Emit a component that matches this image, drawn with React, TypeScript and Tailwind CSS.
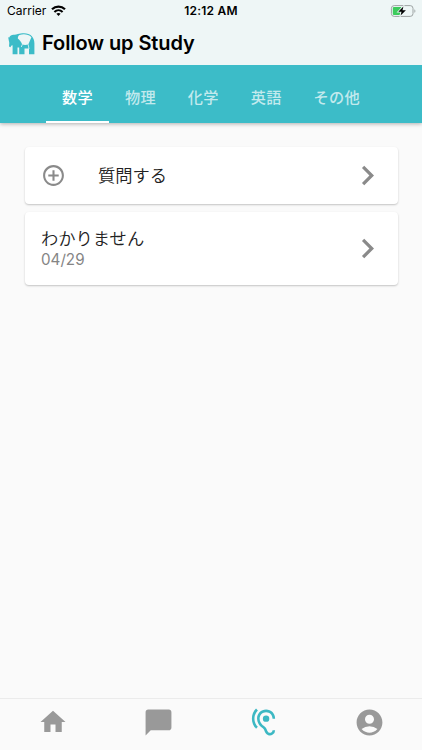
import {
  MdAccountCircle,
  MdAddCircleOutline,
  MdChatBubble,
  MdChevronRight,
  MdHearing,
  MdHome,
} from "react-icons/md";

const tabs = ["数学", "物理", "化学", "英語", "その他"];

function Elephant() {
  return (
    <svg width="27" height="22" viewBox="0 0 27 22" fill="#3cbcc8">
      <path d="M1.300 4.500C2 2.400 4 1.600 6 1.800c1.500.1 2.500-.2 3.800-.7C11.700.4 13.700.2 16 .2c6.500 0 10.400 4 10.400 10V21.300H21V15.600h-4.500v5.700H11.200V14.500H9.500v6.800H4.600V12.200C3 12.400 2.700 13.300 2.600 14.300L1 13.500C1.200 11 1.500 10 .9 8L.2 4.200z" />
      <path
        d="M11.500 2.100c4-1.500 9-.8 11.900 2.100L20.300 11.600c-2.200.5-4.300.5-6.100 0C13.400 9 11.800 7.200 9.800 5.500c.1-1.500.6-2.800 1.700-3.400z"
        fill="#eef6f6"
      />
      <path d="M14.300 11.400L13.300 14M20.200 11.400L21 16" stroke="#eef6f6" strokeWidth=".8" />
    </svg>
  );
}

function StatusBar() {
  return (
    <div className="relative flex h-[22px] items-center justify-between pl-[7px] pr-[6px]">
      <div className="flex items-center gap-[5px]">
        <span className="text-[12px] leading-[22px]">Carrier</span>
        <svg width="15" height="12" viewBox="0 0 15 12" fill="none" stroke="#000">
          <path d="M1 4.300C4.700.6 10.300.6 14 4.300" strokeWidth="2.200" />
          <path d="M3.400 6.900C5.800 4.600 9.200 4.600 11.600 6.900" strokeWidth="2.100" />
          <path d="M5.400 8.700c1.200-1.100 3-1.100 4.200 0L7.500 11z" fill="#000" stroke="none" />
        </svg>
      </div>
      <div className="absolute inset-x-0 text-center text-[12px] font-semibold leading-[22px] tracking-[0.25px]">
        12:12 AM
      </div>
      <svg width="26" height="12" viewBox="0 0 26 12">
        <rect x="1.400" y=".6" width="21.600" height="10.800" rx="2.800" fill="none" stroke="#9da3a3" />
        <path d="M4 2h7.500L9 6.500h2L9.500 10H4a1.200 1.200 0 0 1-1.200-1.200V3.200A1.200 1.200 0 0 1 4 2z" fill="#3ccb5c" />
        <path d="M13.400 1.500L8.300 6.700h3.200L10.600 10.500l5.300-5.300h-3.400z" fill="#000" stroke="#eef6f6" strokeWidth="1.500" paintOrder="stroke" />
        <path d="M24.400 4.200c1.300.5 1.300 3.100 0 3.600z" fill="#9da3a3" />
      </svg>
    </div>
  );
}

export default function App() {
  return (
    <div className="flex h-[750px] w-[422px] flex-col overflow-hidden bg-[#fafafa] font-['Inter','Noto_Sans_CJK_JP',sans-serif]">
      <div className="relative h-[65px] bg-[#eef6f6] text-black">
        <StatusBar />
        <div className="flex h-[43px] items-center gap-[7px] pl-[8px]">
          <Elephant />
          <h1 className="text-[20px] font-[560] leading-[43px] tracking-[-0.08px]">
            Follow up Study
          </h1>
        </div>
      </div>

      <div className="flex h-[57.5px] justify-center bg-[#3cbcc8] text-[15.2px] font-medium shadow-[0_1px_4px_rgba(0,0,0,0.3)]">
        {tabs.map((tab, i) => (
          <div
            key={tab}
            className={
              i === 0
                ? "border-b-[2px] border-white px-[16px] pt-[5px] leading-[56px] tracking-[0.25px] text-white"
                : "px-[16px] pt-[5px] leading-[56px] tracking-[0.25px] text-white/70"
            }
          >
            {tab}
          </div>
        ))}
      </div>

      <div className="flex flex-1 flex-col gap-[8px] px-[24.500px] pt-[24.500px]">
        <div className="flex h-[57px] items-center rounded-[4px] bg-white pl-[16px] pr-[10.500px] shadow-[0_1px_2px_rgba(0,0,0,0.22)]">
          <MdAddCircleOutline size={25} color="#8a8a8a" />
          <div className="flex-1 pl-[32.500px] text-[17.300px] font-[350] leading-6 text-[#222]">
            質問する
          </div>
          <MdChevronRight size={39} color="#8a8a8a" />
        </div>
        <div className="flex h-[73px] items-center rounded-[4px] bg-white pl-[16.500px] pr-[10.500px] shadow-[0_1px_2px_rgba(0,0,0,0.22)]">
          <div className="flex-1 pb-[1px]">
            <div className="text-[17.300px] font-[350] leading-[24px] text-[#222]">
              わかりません
            </div>
            <div className="text-[15.200px] leading-[18px] text-[#858585]">04/29</div>
          </div>
          <MdChevronRight size={39} color="#8a8a8a" />
        </div>
      </div>

      <div className="flex h-[52px] border-t border-[#ebebeb] pt-[8px] text-[#999]">
        <div className="flex flex-1 justify-center">
          <MdHome size={30} />
        </div>
        <div className="flex flex-1 justify-center">
          <MdChatBubble size={31} />
        </div>
        <div className="flex flex-1 justify-center">
          <MdHearing size={31} color="#3cb8c3" />
        </div>
        <div className="flex flex-1 justify-center">
          <MdAccountCircle size={31} />
        </div>
      </div>
    </div>
  );
}
